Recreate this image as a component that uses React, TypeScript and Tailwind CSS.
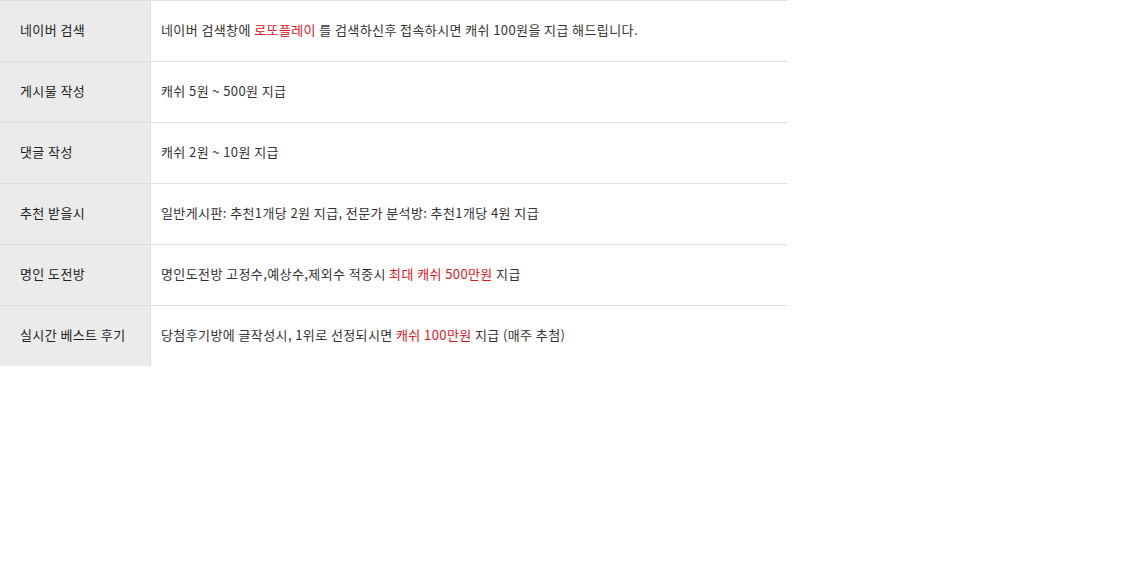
const rows: { title: string; body: React.ReactNode }[] = [
  {
    title: "네이버 검색",
    body: (
      <>
        네이버 검색창에 <span className="text-[#e0141e]">로또플레이</span> 를 검색하신후 접속하시면 캐쉬 100원을 지급 해드립니다.
      </>
    ),
  },
  { title: "게시물 작성", body: "캐쉬 5원 ~ 500원 지급" },
  { title: "댓글 작성", body: "캐쉬 2원 ~ 10원 지급" },
  {
    title: "추천 받을시",
    body: "일반게시판: 추천1개당 2원 지급, 전문가 분석방: 추천1개당 4원 지급",
  },
  {
    title: "명인 도전방",
    body: (
      <>
        명인도전방 고정수,예상수,제외수 적중시 <span className="text-[#e0141e]">최대 캐쉬 500만원</span> 지급
      </>
    ),
  },
  {
    title: "실시간 베스트 후기",
    body: (
      <>
        당첨후기방에 글작성시, 1위로 선정되시면 <span className="text-[#e0141e]">캐쉬 100만원</span> 지급 (매주 추첨)
      </>
    ),
  },
];

export default function App() {
  return (
    <div className="w-[1140px] h-[576px] bg-white font-['Noto_Sans_CJK_KR','Noto_Sans',sans-serif] text-[13px] tracking-[0.4px] text-[#333333]">
      <div className="w-[787px]">
        {rows.map((row) => (
          <div key={row.title} className="flex h-[61px] border-t border-[#dddddd]">
            <div className="flex w-[151px] shrink-0 items-center border-r border-[#dddddd] bg-[#ebebeb] pb-[2px] pl-5 text-[#222222]">
              <span>{row.title}</span>
            </div>
            <div className="flex flex-1 items-center pb-[2px] pl-[10px]">
              <span>{row.body}</span>
            </div>
          </div>
        ))}
      </div>
    </div>
  );
}
